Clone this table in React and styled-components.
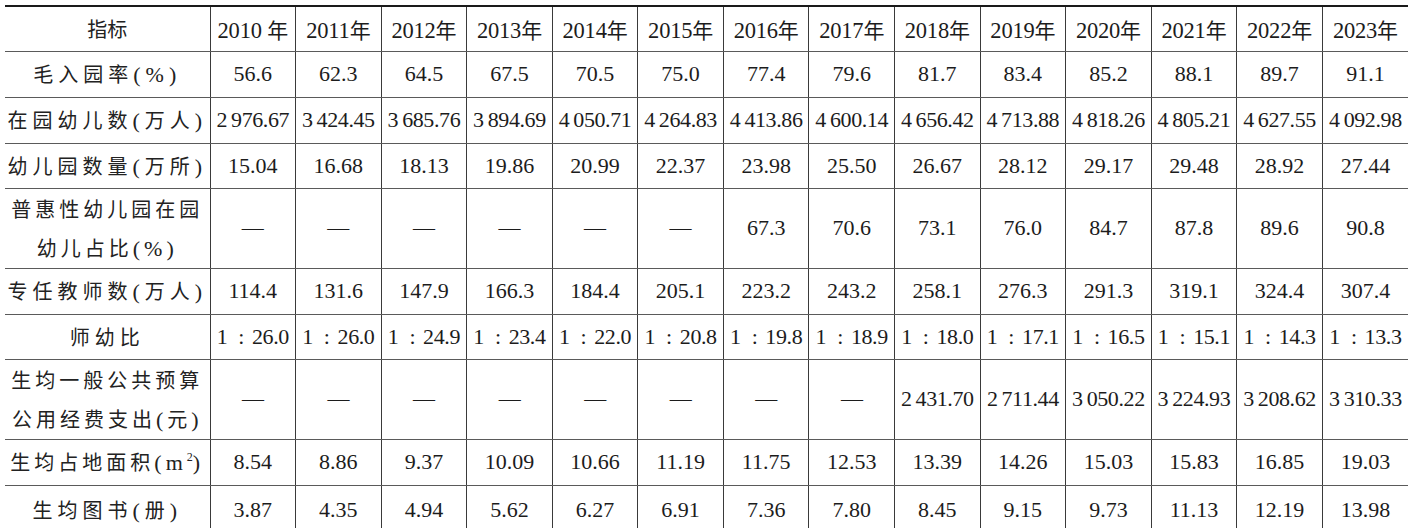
import React from "react";
import styled, { createGlobalStyle } from "styled-components";

const Global = createGlobalStyle`
  html, body { margin: 0; padding: 0; background: #ffffff; }
  body { font-family: "Liberation Serif", "Noto Sans CJK SC", serif; color: #1c1c1c; }
`;

const Page = styled.div`
  padding: 5px 5px 0 5px;
  width: 1403px;
`;

const Table = styled.table`
  width: 1403px;
  border-collapse: collapse;
  table-layout: fixed;
  border-top: 2px solid #1a1a1a;
`;

const Row = styled.tr`
  height: ${(p) => p.$h}px;
`;

const LabelCell = styled.td`
  width: 205px;
  padding: 0;
  text-align: center;
  vertical-align: middle;
  font-family: "Noto Sans CJK SC", "Liberation Serif", sans-serif;
  font-size: 20px;
  line-height: 39px;
  letter-spacing: ${(p) => p.$ls || 0}px;
  color: #222;
  border-bottom: 1px solid #5a5a5a;
  white-space: nowrap;
  & .paren {
    font-family: "Liberation Serif", serif;
    font-size: 22px;
  }
`;

const Cell = styled.td`
  padding: 0;
  text-align: center;
  vertical-align: middle;
  font-family: "Liberation Serif", "Noto Sans CJK SC", serif;
  font-size: 22px;
  color: #1c1c1c;
  border-left: 1px solid #3a3a3a;
  border-bottom: 1px solid #5a5a5a;
  white-space: nowrap;
  letter-spacing: ${(p) => (p.$tight ? -0.4 : 0)}px;
`;

const HeadYear = styled.span`
  font-size: 22.5px;
  letter-spacing: -0.2px;
  & .nian {
    font-family: "Noto Sans CJK SC", sans-serif;
    font-size: 21px;
  }
`;

const Colon = styled.span`
  font-family: "Liberation Serif", serif;
  margin: 0 8px 0 11px;
`;

const Sup = styled.sup`
  font-size: 12px;
  vertical-align: 9px;
  line-height: 0;
  letter-spacing: 0;
`;

const years = [2010, 2011, 2012, 2013, 2014, 2015, 2016, 2017, 2018, 2019, 2020, 2021, 2022, 2023];

const T = "\u2009";
const D = "—";

const P = ({ children }) => <span className="paren">{children}</span>;

const rows = [
  {
    h: 46,
    ls: 5,
    label: <>毛入园率<P>(%)</P></>,
    vals: ["56.6", "62.3", "64.5", "67.5", "70.5", "75.0", "77.4", "79.6", "81.7", "83.4", "85.2", "88.1", "89.7", "91.1"],
  },
  {
    h: 46,
    ls: 5,
    label: <>在园幼儿数<P>(</P>万人<P>)</P></>,
    vals: ["2976.67", "3424.45", "3685.76", "3894.69", "4050.71", "4264.83", "4413.86", "4600.14", "4656.42", "4713.88", "4818.26", "4805.21", "4627.55", "4092.98"].map(
      (v) => v[0] + T + v.slice(1)
    ),
    tight: true,
  },
  {
    h: 45,
    ls: 5,
    label: <>幼儿园数量<P>(</P>万所<P>)</P></>,
    vals: ["15.04", "16.68", "18.13", "19.86", "20.99", "22.37", "23.98", "25.50", "26.67", "28.12", "29.17", "29.48", "28.92", "27.44"],
  },
  {
    h: 79,
    ls: 4,
    label: <>普惠性幼儿园在园<br />幼儿占比<P>(%)</P></>,
    vals: [D, D, D, D, D, D, "67.3", "70.6", "73.1", "76.0", "84.7", "87.8", "89.6", "90.8"],
  },
  {
    h: 46,
    ls: 5,
    label: <>专任教师数<P>(</P>万人<P>)</P></>,
    vals: ["114.4", "131.6", "147.9", "166.3", "184.4", "205.1", "223.2", "243.2", "258.1", "276.3", "291.3", "319.1", "324.4", "307.4"],
  },
  {
    h: 45,
    ls: 5,
    label: <>师幼比</>,
    ratio: true,
    vals: ["26.0", "26.0", "24.9", "23.4", "22.0", "20.8", "19.8", "18.9", "18.0", "17.1", "16.5", "15.1", "14.3", "13.3"],
    tight: true,
  },
  {
    h: 79,
    ls: 4,
    label: <>生均一般公共预算<br />公用经费支出<P>(</P>元<P>)</P></>,
    vals: [D, D, D, D, D, D, D, D, "2431.70", "2711.44", "3050.22", "3224.93", "3208.62", "3310.33"].map((v) =>
      v === D ? v : v[0] + T + v.slice(1)
    ),
    tight: true,
  },
  {
    h: 46,
    ls: 4,
    label: <>生均占地面积<P>(m<Sup>2</Sup>)</P></>,
    vals: ["8.54", "8.86", "9.37", "10.09", "10.66", "11.19", "11.75", "12.53", "13.39", "14.26", "15.03", "15.83", "16.85", "19.03"],
  },
  {
    h: 50,
    ls: 5,
    label: <>生均图书<P>(</P>册<P>)</P></>,
    vals: ["3.87", "4.35", "4.94", "5.62", "6.27", "6.91", "7.36", "7.80", "8.45", "9.15", "9.73", "11.13", "12.19", "13.98"],
  },
];

export default function App() {
  return (
    <Page>
      <Global />
      <Table>
        <colgroup>
          <col style={{ width: 205 }} />
          {years.map((y) => (
            <col key={y} />
          ))}
        </colgroup>
        <tbody>
          <Row $h={45}>
            <LabelCell $ls={0}>指标</LabelCell>
            {years.map((y) => (
              <Cell key={y}>
                <HeadYear>
                  {y}
                  {y === 2010 ? " " : ""}
                  <span className="nian">年</span>
                </HeadYear>
              </Cell>
            ))}
          </Row>
          {rows.map((r, i) => (
            <Row key={i} $h={r.h}>
              <LabelCell $ls={r.ls}>{r.label}</LabelCell>
              {r.vals.map((v, j) => (
                <Cell key={j} $tight={r.tight}>
                  {r.ratio ? (
                    <>
                      1<Colon>:</Colon>
                      {v}
                    </>
                  ) : (
                    v
                  )}
                </Cell>
              ))}
            </Row>
          ))}
        </tbody>
      </Table>
    </Page>
  );
}
